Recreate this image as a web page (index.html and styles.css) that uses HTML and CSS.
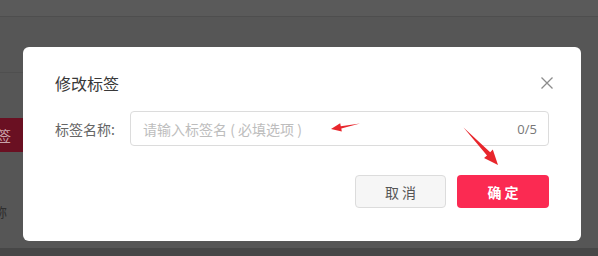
FILE: index.html
```html
<!DOCTYPE html>
<html lang="zh">
<head>
<meta charset="utf-8">
<link rel="stylesheet" href="styles.css">
</head>
<body>
<div class="page">
  <div class="topbar"></div>
  <div class="content">
    <div class="side">
      <div class="row-line"></div>
      <div class="tag-btn">标签</div>
      <div class="side-text">名称</div>
    </div>
  </div>
  <div class="bottombar"></div>
</div>

<div class="modal">
  <div class="modal-head">
    <div class="modal-title">修改标签</div>
    <button class="close" aria-label="关闭">
      <svg width="12" height="12" viewBox="0 0 12 12"><path d="M0.5 0.5L11.5 11.5M11.5 0.5L0.5 11.5" stroke="#8c8c8c" stroke-width="1.3" fill="none"/></svg>
    </button>
  </div>
  <div class="form-row">
    <label class="form-label">标签名称:</label>
    <div class="input">
      <span class="placeholder">请输入标签名 ( 必填选项 )</span>
      <span class="count">0/5</span>
    </div>
  </div>
  <div class="actions">
    <button class="btn btn-cancel">取 消</button>
    <button class="btn btn-ok">确 定</button>
  </div>
</div>

<svg class="annot" width="598" height="256" viewBox="0 0 598 256">
  <polygon fill="#e8262c" points="331,129 340.2,123.2 340.8,126.2 360,123.6 341.3,128.6 341.8,131.6"/>
  <polygon fill="#e8262c" points="498,165 484,158 487,155.4 463.5,127.6 490.2,152.2 492.8,149.4"/>
</svg>
</body>
</html>
```
FILE: styles.css
```css
html, body {
  margin: 0;
  padding: 0;
}
body {
  width: 598px;
  height: 256px;
  overflow: hidden;
  background: #565656;
  font-family: "Noto Sans CJK SC", "Noto Sans", sans-serif;
  position: relative;
}
.page {
  display: flex;
  flex-direction: column;
  height: 256px;
}
.topbar {
  height: 16px;
  background: #5a5a5a;
  border-bottom: 1px solid #4e4e4e;
}
.content {
  flex: 1;
  display: flex;
}
.side {
  width: 23px;
  overflow: hidden;
  display: flex;
  flex-direction: column;
}
.row-line {
  margin-top: 55px;
  height: 1px;
  background: #4f4f4f;
}
.tag-btn {
  margin-top: 45px;
  height: 34px;
  width: 40px;
  margin-left: -17px;
  background: #6a1022;
  color: #c9a3aa;
  font-size: 14px;
  line-height: 34px;
  text-align: left;
}
.side-text {
  margin-top: 52px;
  width: 40px;
  margin-left: -19px;
  font-size: 13px;
  color: #2e2e2e;
  line-height: 16px;
}
.bottombar {
  height: 8px;
  background: #474747;
}
.modal {
  position: absolute;
  left: 23px;
  top: 47px;
  width: 558px;
  height: 194px;
  box-sizing: border-box;
  background: #fff;
  border-radius: 6px;
  padding: 24px 32px 0 32px;
}
.modal-head {
  display: flex;
  align-items: center;
  justify-content: space-between;
  height: 24px;
  margin-right: -4px;
}
.modal-title {
  font-size: 16px;
  color: #383838;
  line-height: 24px;
}
.close {
  border: 0;
  background: none;
  padding: 0;
  width: 12px;
  height: 12px;
  display: flex;
}
.form-row {
  display: flex;
  align-items: center;
  margin-top: 16px;
}
.form-label {
  width: 75px;
  flex: none;
  font-size: 14px;
  color: #666;
}
.input {
  flex: 1;
  height: 35px;
  box-sizing: border-box;
  border: 1px solid #dcdcdc;
  border-radius: 4px;
  display: flex;
  align-items: center;
  justify-content: space-between;
  padding: 0 11px 0 12px;
  font-size: 14px;
}
.placeholder {
  color: #bdbdbd;
  white-space: pre;
}
.count {
  color: #777;
  font-family: "Open Sans", "Noto Sans", sans-serif;
  font-size: 13px;
}
.actions {
  display: flex;
  justify-content: flex-end;
  gap: 11px;
  margin-top: 29px;
}
.btn {
  height: 33px;
  border-radius: 4px;
  font-family: "Noto Sans CJK SC", sans-serif;
  font-size: 14px;
  padding: 0;
}
.btn-cancel {
  width: 91px;
  background: #f6f6f6;
  border: 1px solid #dcdcdc;
  color: #555;
}
.btn-ok {
  width: 92px;
  background: #fb2a52;
  border: 0;
  color: #fff;
  font-weight: bold;
}
.annot {
  position: absolute;
  left: 0;
  top: 0;
  pointer-events: none;
}
```
